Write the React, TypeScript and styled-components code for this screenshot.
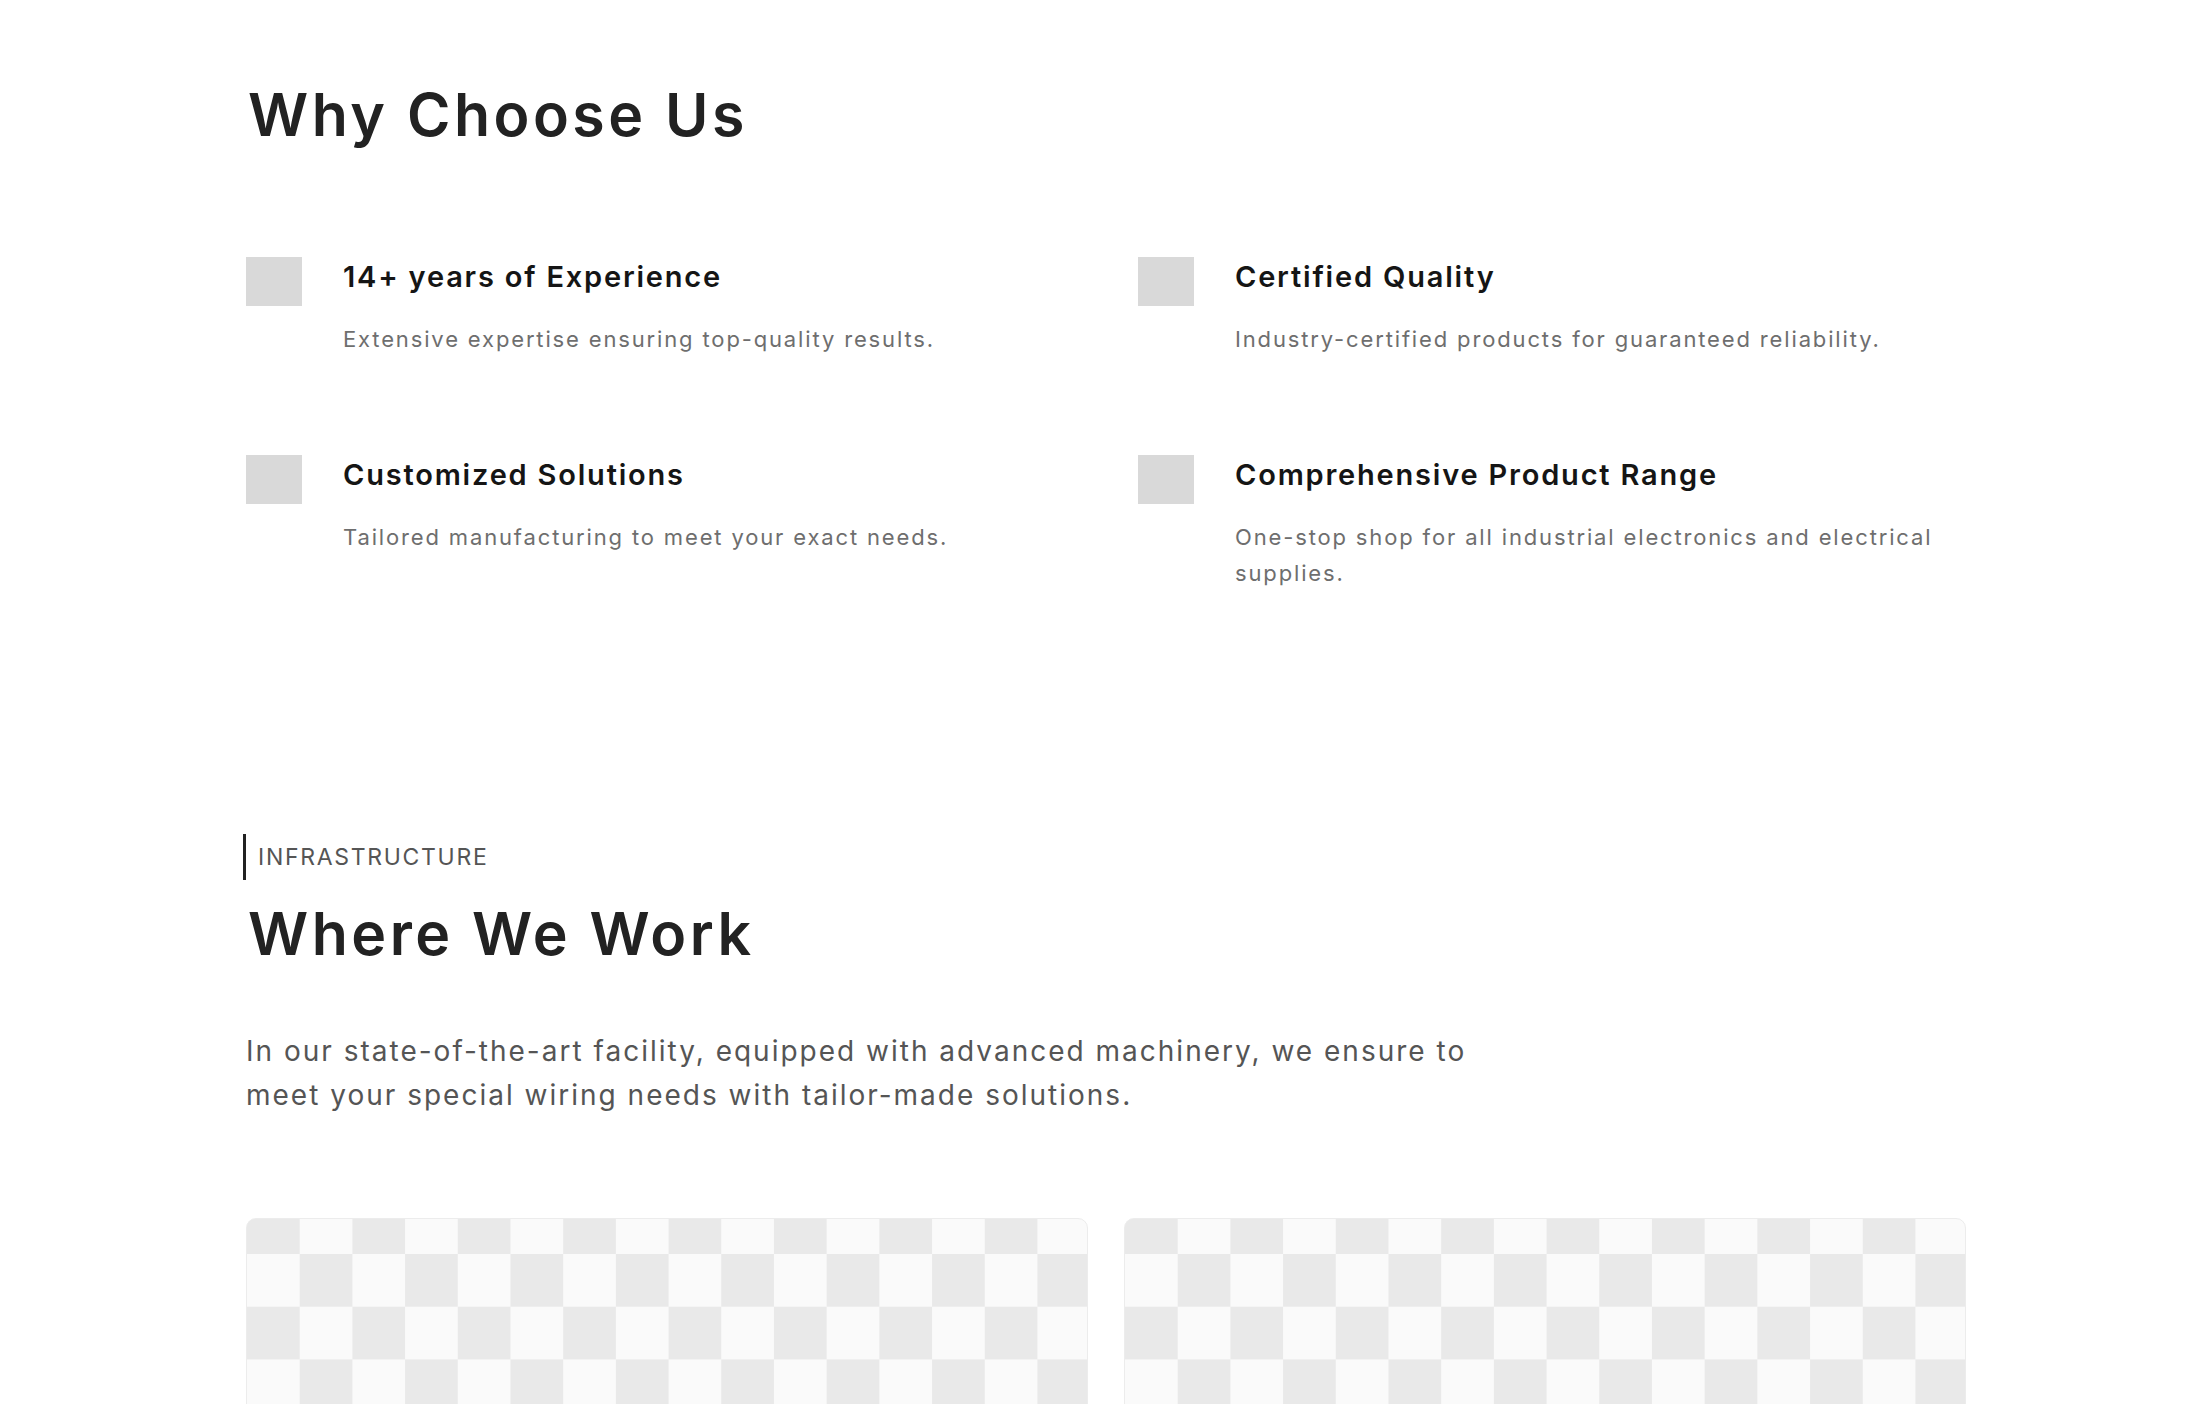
import React from "react";
import styled, { createGlobalStyle } from "styled-components";

const GlobalStyle = createGlobalStyle`
  html, body {
    margin: 0;
    padding: 0;
    background: #ffffff;
  }
  body {
    font-family: Inter, "Noto Sans", "Liberation Sans", sans-serif;
    color: #222222;
    -webkit-font-smoothing: antialiased;
  }
  * { box-sizing: border-box; }
`;

const Page = styled.main`
  width: 1720px;
  margin: 0 auto;
  padding-top: 80px;
  padding-bottom: 60px;
`;

const SectionTitle = styled.h2`
  margin: 0;
  font-size: 59px;
  line-height: 69.6px;
  font-weight: 600;
  letter-spacing: 3.5px;
  color: #222222;
  padding-left: 2px;
`;

const FeatureGrid = styled.div`
  margin-top: 107px;
  display: grid;
  grid-template-columns: 1fr 1fr;
  column-gap: 64px;
  row-gap: 98px;
`;

const Feature = styled.div`
  display: flex;
  align-items: flex-start;
  gap: 41px;
`;

const FeatureIcon = styled.div`
  flex: 0 0 auto;
  width: 56px;
  height: 49px;
  background: #d9d9d9;
`;

const FeatureText = styled.div`
  padding-top: 2px;
  display: flex;
  flex-direction: column;
  gap: 27px;
`;

const FeatureTitle = styled.h3`
  margin: 0;
  font-size: 29px;
  line-height: 35px;
  font-weight: 600;
  letter-spacing: 1.8px;
  color: #151515;
`;

const FeatureDesc = styled.p`
  margin: 0;
  font-size: 22px;
  line-height: 36px;
  font-weight: 400;
  letter-spacing: 1.85px;
  color: #6e6e6e;
`;

const Infra = styled.section`
  margin-top: 243px;
`;

const Eyebrow = styled.div`
  display: flex;
  align-items: center;
  height: 46px;
  border-left: 3px solid #222222;
  padding-left: 12px;
  margin-left: -3px;
  font-size: 23px;
  font-weight: 400;
  letter-spacing: 1.7px;
  color: #555555;
  text-transform: uppercase;
`;

const InfraTitle = styled(SectionTitle)`
  margin-top: 19px;
`;

const Lead = styled.p`
  margin: 61px 0 0;
  max-width: 1260px;
  font-size: 28px;
  line-height: 44px;
  font-weight: 400;
  letter-spacing: 2px;
  color: #555555;
`;

const Gallery = styled.div`
  margin-top: 101px;
  display: grid;
  grid-template-columns: 1fr 1fr;
  gap: 36px;
`;

const Placeholder = styled.div`
  height: 480px;
  border: 1px solid #ececec;
  border-radius: 10px;
  background-color: #fafafa;
  background-image: conic-gradient(
    #fafafa 0 25%,
    #e9e9e9 0 50%,
    #fafafa 0 75%,
    #e9e9e9 0
  );
  background-size: 105.4px 105.4px;
  background-position: 0 -17.7px;
`;

const features = [
  {
    title: "14+ years of Experience",
    desc: "Extensive expertise ensuring top-quality results.",
  },
  {
    title: "Certified Quality",
    desc: "Industry-certified products for guaranteed reliability.",
  },
  {
    title: "Customized Solutions",
    desc: "Tailored manufacturing to meet your exact needs.",
  },
  {
    title: "Comprehensive Product Range",
    desc: "One-stop shop for all industrial electronics and electrical supplies.",
  },
];

export default function App() {
  return (
    <>
      <GlobalStyle />
      <Page>
        <section>
          <SectionTitle>Why Choose Us</SectionTitle>
          <FeatureGrid>
            {features.map((f) => (
              <Feature key={f.title}>
                <FeatureIcon />
                <FeatureText>
                  <FeatureTitle>{f.title}</FeatureTitle>
                  <FeatureDesc>{f.desc}</FeatureDesc>
                </FeatureText>
              </Feature>
            ))}
          </FeatureGrid>
        </section>
        <Infra>
          <Eyebrow>Infrastructure</Eyebrow>
          <InfraTitle>Where We Work</InfraTitle>
          <Lead>
            In our state-of-the-art facility, equipped with advanced machinery, we ensure to
            meet your special wiring needs with tailor-made solutions.
          </Lead>
          <Gallery>
            <Placeholder />
            <Placeholder />
          </Gallery>
        </Infra>
      </Page>
    </>
  );
}
